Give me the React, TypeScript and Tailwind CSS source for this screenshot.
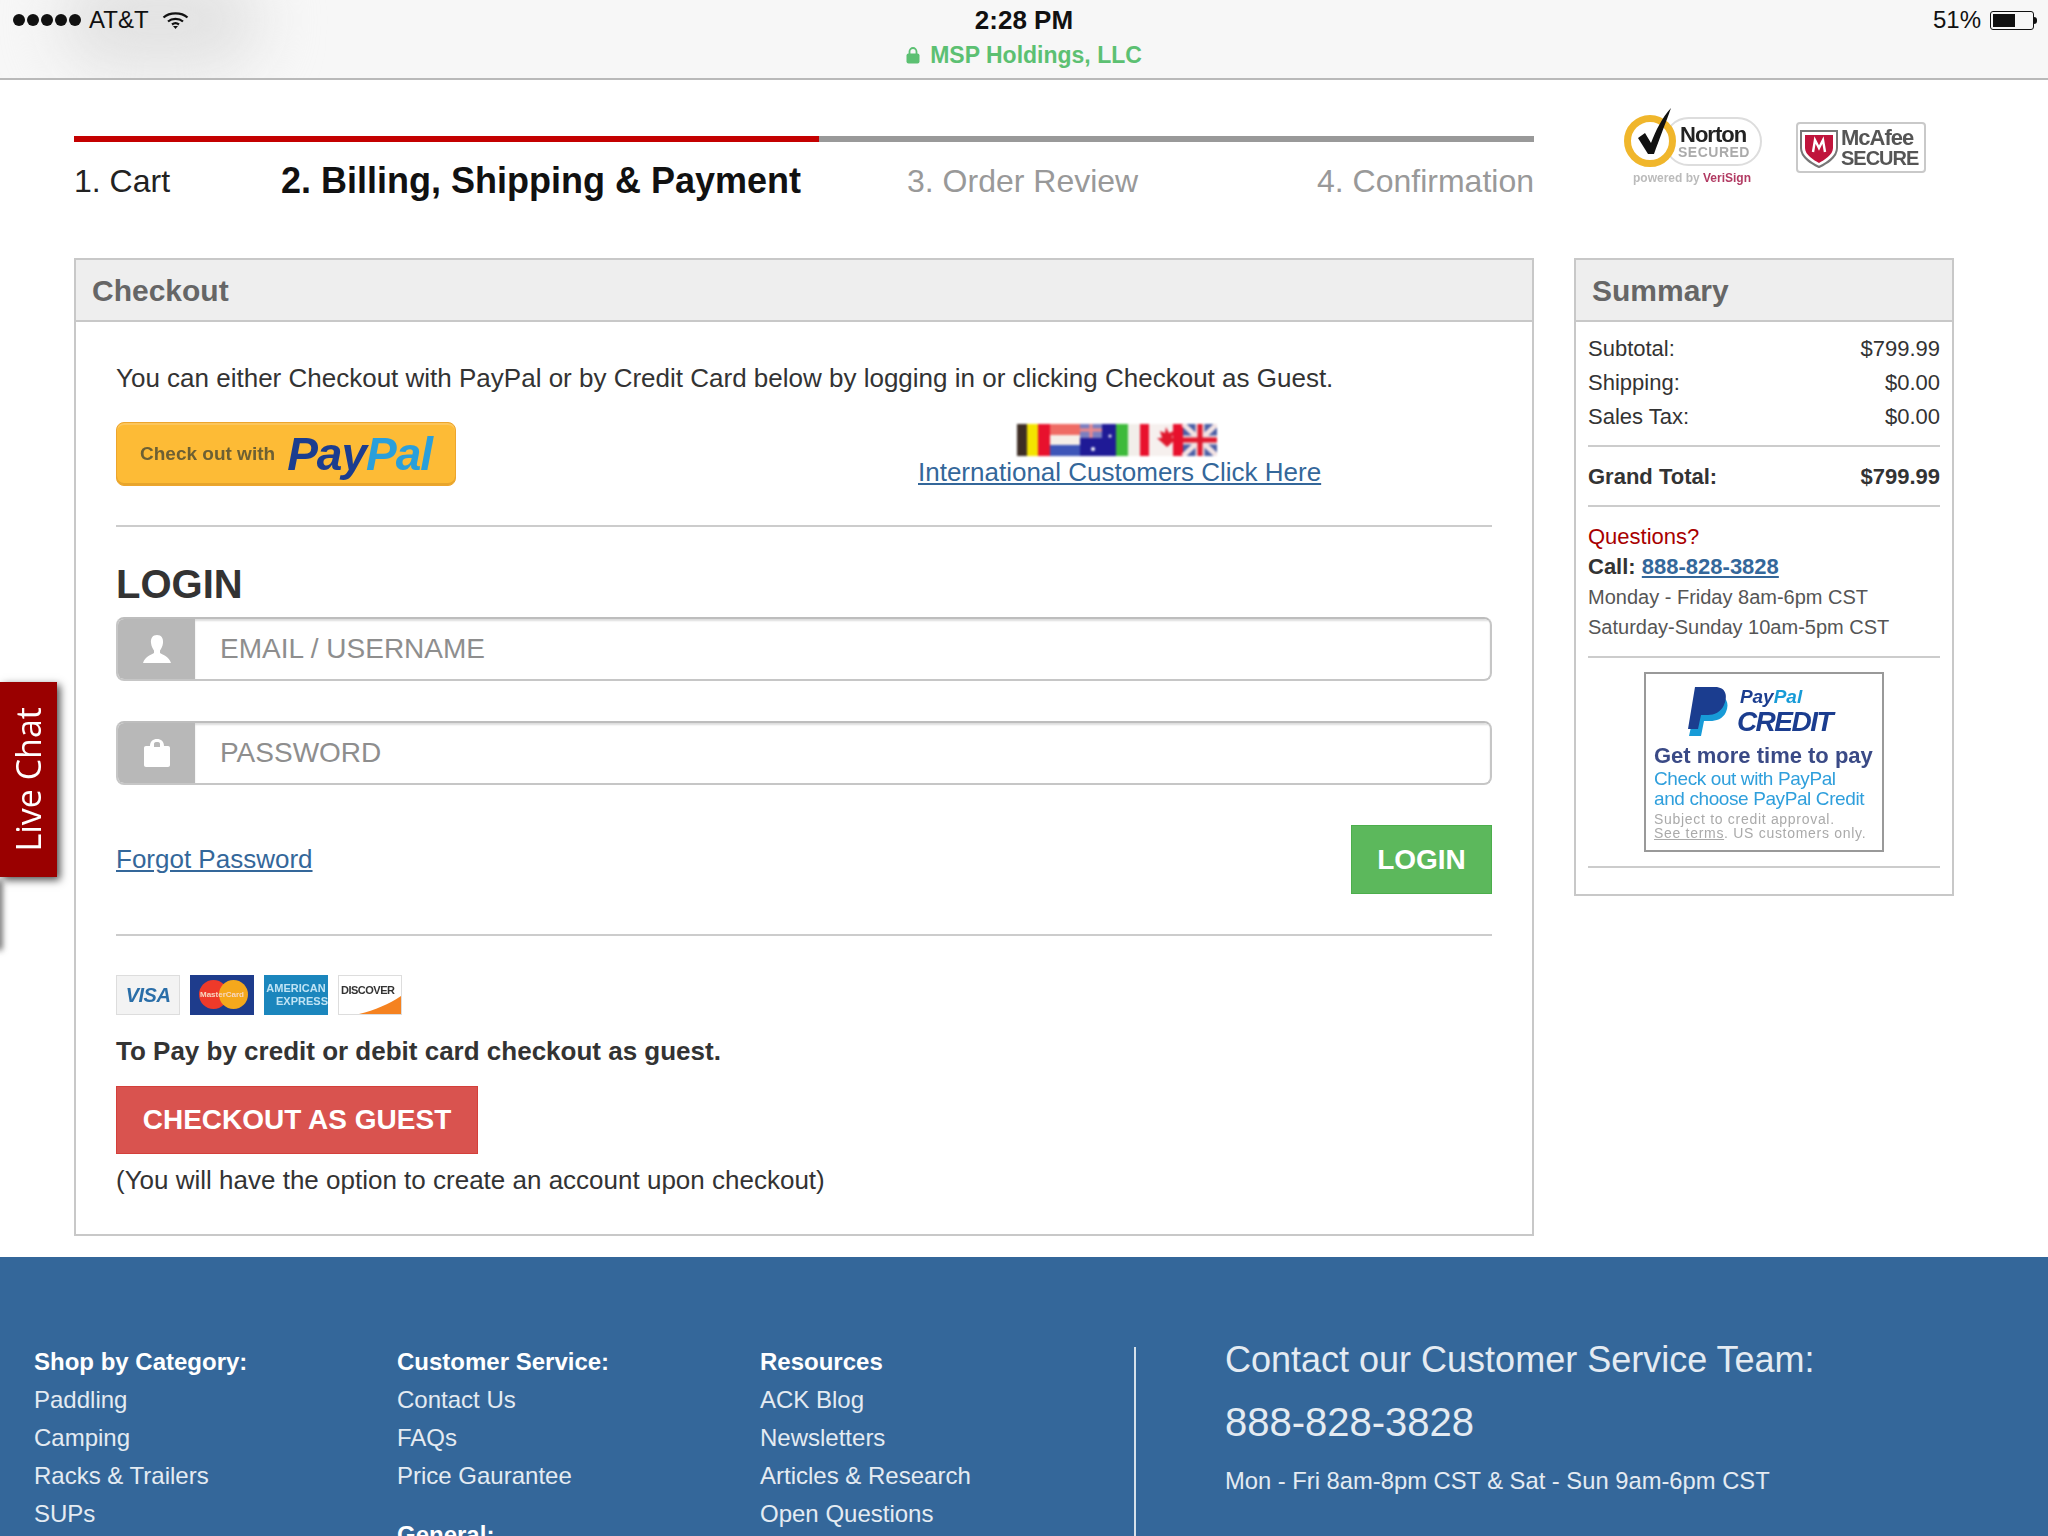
const font = 'font-["Liberation_Sans",Arial,sans-serif]'
const link = 'text-[#34679a] underline underline-offset-2'

function Wifi() {
  return (
    <svg width="27" height="18" viewBox="0 0 27 18" fill="none" stroke="#111" strokeWidth="2.2">
      <path d="M1.5 6.5 C7.5 1 19.5 1 25.5 6.5" />
      <path d="M6 10.5 C10 7 17 7 21 10.5" />
      <path d="M10 13.5 C12 12 15 12 17 13.5" />
      <path d="M11 15 L13.5 18 L16 15 Z" fill="#111" stroke="none" />
    </svg>
  )
}

function StatusBar() {
  return (
    <div className="relative h-[80px] overflow-hidden border-b-2 border-[#b9b9b9] bg-[#f7f7f7] text-[24px] text-[#111]">
      <div className="absolute -top-[30px] left-[60px] h-[100px] w-[200px] rounded-full bg-[#e2e2e2] blur-[30px]" />
      <div className="absolute left-[13px] top-[2px] flex items-center gap-[8px]">
        <div className="flex gap-[2px]">
          {[0, 1, 2, 3, 4].map((dot) => <span key={dot} className="size-[12px] rounded-full bg-[#111]" />)}
        </div>
        <span>AT&amp;T</span>
        <span className="ml-[5px]"><Wifi /></span>
      </div>
      <div className="absolute inset-x-0 top-[5px] flex flex-col items-center">
        <span className="text-[26px] font-bold leading-[30px]">2:28 PM</span>
        <span className="mt-[6px] flex items-center gap-[10px] text-[23px] font-bold leading-[28px] text-[#5cc072]">
          <svg width="14" height="17" viewBox="0 0 14 17" fill="#5cc072">
            <rect x="0.5" y="6.5" width="13" height="10" rx="2" />
            <path d="M3.5 7 V4.5 a3.5 3.5 0 0 1 7 0 V7" fill="none" stroke="#5cc072" strokeWidth="1.8" />
          </svg>
          MSP Holdings, LLC
        </span>
      </div>
      <div className="absolute right-[11px] top-[2px] flex items-center gap-[9px]">
        <span>51%</span>
        <div className="flex items-center">
          <div className="h-[19px] w-[44px] rounded-[3px] border border-[#111] p-[2px]">
            <div className="h-full w-[22px] bg-[#111]" />
          </div>
          <div className="h-[7px] w-[3px] rounded-r-full bg-[#111]" />
        </div>
      </div>
    </div>
  )
}

function Steps() {
  return (
    <div className="w-[1460px]">
      <div className="flex h-[6px] bg-[#999]">
        <div className="w-[745px] bg-[#c40000]" />
      </div>
      <div className="mt-[16px] flex h-[46px] items-center text-[32px] leading-[46px]">
        <span className="w-[207px] text-[#222]">1. Cart</span>
        <span className="w-[626px] text-[36px] font-bold text-[#111]">2. Billing, Shipping &amp; Payment</span>
        <span className="text-[#999]">3. Order Review</span>
        <span className="ml-auto text-[#999]">4. Confirmation</span>
      </div>
    </div>
  )
}

function TrustBadges() {
  return (
    <div className="ml-[90px] flex gap-[30px] blur-[0.5px]">
      <div className="relative -mt-[28px] h-[80px] w-[142px]">
        <div className="absolute left-[40px] top-[9px] h-[49px] w-[98px] rounded-[25px] border-2 border-[#ddd]" />
        <div className="absolute left-0 top-[7px] size-[52px] rounded-full border-[7px] border-[#f0b62b] bg-white" />
        <svg className="absolute left-[8px] top-0" width="42" height="54" viewBox="0 0 42 54" fill="#111">
          <path d="M6 30 L13 25 L19 35 C24 22 30 10 39 0 C34 14 27 32 22 46 L16 46 Z" />
        </svg>
        <span className="absolute left-[56px] top-[15px] text-[22px] font-bold leading-[24px] tracking-[-1px] text-[#222]">Norton</span>
        <span className="absolute left-[54px] top-[35px] text-[14px] font-bold leading-[18px] tracking-[0.5px] text-[#aaa]">SECURED</span>
        <span className="absolute left-[9px] top-[63px] whitespace-nowrap text-[12px] font-bold leading-[14px] text-[#bbb]">
          powered by <span className="text-[#b23b63]">VeriSign</span>
        </span>
      </div>
      <div className="-mt-[14px] flex h-[51px] w-[130px] items-center gap-[3px] rounded-[4px] border-2 border-[#c9c9c9] px-[2px]">
        <svg className="shrink-0" width="38" height="40" viewBox="0 0 38 40">
          <path d="M1 3 H37 V20 C37 30 25 36 19 39 C13 36 1 30 1 20 Z" fill="#fff" stroke="#777" strokeWidth="2" />
          <path d="M5 7 H33 V20 C33 27 24 32 19 35 C14 32 5 27 5 20 Z" fill="#c0143c" />
          <path d="M13 24 L15 12 L19 20 L23 12 L25 24" fill="none" stroke="#fff" strokeWidth="2.4" />
        </svg>
        <div className="flex flex-col font-bold tracking-[-1px] text-[#555]">
          <span className="text-[22px] leading-[21px]">McAfee</span>
          <span className="text-[20px] leading-[20px]">SECURE</span>
        </div>
      </div>
    </div>
  )
}

function PayPalButton() {
  return (
    <div className="flex h-[64px] w-[340px] shrink-0 items-center rounded-[8px] border border-[#eda52d] bg-[#fdbb36] pl-[23px] shadow-[inset_0_2px_0_#fcc65c,inset_0_-2px_0_#e7a52c]">
      <span className="text-[19px] font-bold text-[#6d6033] blur-[0.4px]">Check out with</span>
      <span className="ml-[12px] text-[46px] font-bold italic leading-[50px] tracking-[-1px] text-[#1b3d8f] blur-[0.3px]">
        Pay<span className="text-[#2a9fdb]">Pal</span>
      </span>
    </div>
  )
}

function Flags() {
  return (
    <svg className="ml-[99px] blur-[0.8px]" width="200" height="32" viewBox="0 0 200 32">
      <rect x="0" width="10" height="32" fill="#3d2d24" />
      <rect x="10" width="11" height="32" fill="#f4e400" />
      <rect x="21" width="12" height="32" fill="#e8112d" />
      <path d="M33 0 H64 V11 H33 Z" fill="#ef6b64" />
      <rect x="33" y="11" width="31" height="10" fill="#f6efe8" />
      <rect x="33" y="21" width="31" height="11" fill="#3d55b8" />
      <rect x="63" width="36" height="32" fill="#1f1a96" />
      <path d="M63 0 H85 V14 H63 Z" fill="#7b7fc0" />
      <path d="M63 6 H85 M74 0 V14" stroke="#f08a8a" strokeWidth="3" />
      <circle cx="76" cy="25" r="2" fill="#fff" />
      <circle cx="93" cy="12" r="1.5" fill="#fff" />
      <rect x="99" width="12" height="32" fill="#3dba3a" />
      <rect x="111" width="12" height="32" fill="#f2eeea" />
      <rect x="123" width="9" height="32" fill="#e8112d" />
      <rect x="132" width="34" height="32" fill="#f6f0ee" />
      <rect x="156" width="10" height="32" fill="#e8112d" />
      <path d="M149 3 L152 9 L157 7 L155 14 L160 14 L150 23 L140 14 L145 14 L143 7 L148 9 Z" fill="#e0182d" />
      <rect x="166" width="34" height="32" fill="#4a5ea5" />
      <path d="M166 0 L200 32 M200 0 L166 32" stroke="#f3e3e3" strokeWidth="5" />
      <path d="M166 16 H200 M183 0 V32" stroke="#f3e3e3" strokeWidth="9" />
      <path d="M166 16 H200 M183 0 V32" stroke="#e0182d" strokeWidth="5" />
    </svg>
  )
}

function UserIcon() {
  return (
    <svg width="28" height="28" viewBox="0 0 28 28" fill="white">
      <path d="M14 0 C18.5 0 20.5 3.5 20 8 C19.6 11.5 18 14 17 15.5 V18 C20 20 26 21.5 28 28 H0 C2 21.5 8 20 11 18 V15.5 C10 14 8.4 11.5 8 8 C7.5 3.5 9.5 0 14 0 Z" />
    </svg>
  )
}

function LockIcon() {
  return (
    <svg width="26" height="28" viewBox="0 0 26 28" fill="white">
      <path fillRule="evenodd" d="M6 7 C6 2.5 9 0 13 0 C17 0 20 2.5 20 7 H24 C25.2 7 26 7.8 26 9 V26 C26 27.2 25.2 28 24 28 H2 C0.8 28 0 27.2 0 26 V9 C0 7.8 0.8 7 2 7 Z M10 5 V8 H16 V5 C16 3.6 15 3 13 3 C11 3 10 3.6 10 5 Z" />
    </svg>
  )
}

function LoginField({ placeholder, icon }: { placeholder: string; icon: React.ReactNode }) {
  return (
    <div className="flex h-[64px] overflow-hidden rounded-[8px] border-2 border-[#c6c6c6] border-t-[#bdbdbd] bg-white">
      <div className="flex w-[77px] items-center justify-center bg-[#b8b8b8]">{icon}</div>
      <input
        placeholder={placeholder}
        readOnly
        className="min-w-0 flex-1 pl-[25px] text-[28px] shadow-[inset_0_2px_2px_#ddd] placeholder:text-[#8e8e8e] focus:outline-none"
      />
    </div>
  )
}

function CardLogos() {
  return (
    <div className="flex gap-[10px] blur-[0.5px]">
      <div className="flex h-[40px] w-[64px] items-center justify-center border border-[#ddd] bg-[#f3f3f3] text-[20px] font-bold italic tracking-[-0.5px] text-[#2a6ea8]">VISA</div>
      <div className="relative h-[40px] w-[64px] bg-[#1e3c8c]">
        <div className="absolute left-[9px] top-[5px] size-[29px] rounded-full bg-[#ee3a2a]" />
        <div className="absolute left-[29px] top-[5px] size-[29px] rounded-full bg-[#f5a81c]" />
        <span className="absolute inset-x-0 top-[14px] text-center text-[8px] font-bold leading-[12px] text-[#f8d8c0]">MasterCard</span>
      </div>
      <div className="flex h-[40px] w-[64px] flex-col items-center justify-center bg-[#1b86bd] text-[11px] font-bold leading-[13px] text-[#bfe3f4]">
        <span>AMERICAN</span>
        <span className="self-end">EXPRESS</span>
      </div>
      <div className="relative h-[40px] w-[64px] overflow-hidden border border-[#ddd] bg-white pl-[2px] pt-[7px] text-[11px] font-bold leading-[14px] tracking-[-0.5px] text-[#333]">
        DISCOVER
        <svg className="absolute bottom-0 right-0" width="42" height="18" viewBox="0 0 42 18">
          <path d="M0 18 C16 14 30 8 42 0 V18 Z" fill="#f58220" />
        </svg>
      </div>
    </div>
  )
}

function CheckoutPanel() {
  return (
    <section className="w-[1460px] shrink-0 border-2 border-[#c8c8c8]">
      <h2 className="flex h-[62px] items-center border-b-2 border-[#c8c8c8] bg-[#eee] pl-[16px] text-[30px] font-bold text-[#666]">Checkout</h2>
      <div className="px-[40px]">
        <p className="mt-[37px] text-[26px] leading-[38px] text-[#333]">
          You can either Checkout with PayPal or by Credit Card below by logging in or clicking Checkout as Guest.
        </p>
        <div className="mt-[25px] flex">
          <PayPalButton />
          <div className="ml-[462px] flex flex-col items-start pt-[2px]">
            <Flags />
            <a className={`whitespace-nowrap text-[26px] leading-[32px] ${link}`}>International Customers Click Here</a>
          </div>
        </div>
        <div className="mt-[37px] border-t-2 border-[#ccc]" />
        <h3 className="mt-[33px] text-[40px] font-bold leading-[48px] text-[#333]">LOGIN</h3>
        <div className="mt-[9px]"><LoginField placeholder="EMAIL / USERNAME" icon={<UserIcon />} /></div>
        <div className="mt-[40px]"><LoginField placeholder="PASSWORD" icon={<LockIcon />} /></div>
        <div className="mt-[40px] flex items-center justify-between">
          <a className={`text-[26px] ${link}`}>Forgot Password</a>
          <button className="flex h-[69px] w-[141px] items-center justify-center border border-[#4cae4c] bg-[#5cb85c] text-[28px] font-bold text-white">LOGIN</button>
        </div>
        <div className="mt-[40px] border-t-2 border-[#ccc]" />
        <div className="mt-[39px]"><CardLogos /></div>
        <p className="mt-[18px] text-[26px] font-bold leading-[36px] text-[#333]">To Pay by credit or debit card checkout as guest.</p>
        <button className="mt-[17px] flex h-[68px] w-[362px] items-center justify-center border border-[#d43f3a] bg-[#d9534f] text-[28px] font-bold text-white">CHECKOUT AS GUEST</button>
        <p className="mt-[7px] pb-[35px] text-[26px] leading-[38px] text-[#333]">(You will have the option to create an account upon checkout)</p>
      </div>
    </section>
  )
}

function SummaryRow({ label, value, bold }: { label: string; value: string; bold?: boolean }) {
  return (
    <div className={`flex h-[34px] items-center justify-between ${bold ? 'font-bold' : ''}`}>
      <span>{label}</span>
      <span>{value}</span>
    </div>
  )
}

function CreditAd() {
  return (
    <div className="mx-auto mt-[14px] h-[180px] w-[240px] border-2 border-[#999] bg-white px-[8px] pt-[13px] blur-[0.4px]">
      <div className="flex items-center justify-center gap-[5px] pr-[8px]">
        <svg width="44" height="50" viewBox="0 0 44 50">
          <path d="M10 8 H28 C38 8 42 16 38 25 C35 32 28 34 22 34 H16 L13 49 H1 Z" fill="#179bd7" />
          <path d="M7 0 H27 C38 0 40 9 36 18 C33 25 26 28 20 28 H13 L10 42 H0 Z" fill="#1b3d8f" />
        </svg>
        <div className="flex flex-col items-start">
          <span className="ml-[3px] text-[19px] font-bold italic leading-[20px] text-[#1b3d8f]">Pay<span className="text-[#179bd7]">Pal</span></span>
          <span className="text-[28px] font-bold italic leading-[30px] tracking-[-1.5px] text-[#1b3d8f]">CREDIT</span>
        </div>
      </div>
      <div className="mt-[6px] whitespace-nowrap text-[22px] font-bold leading-[26px] text-[#3a4a86]">Get more time to pay</div>
      <div className="whitespace-nowrap text-[19px] leading-[20px] tracking-[-0.4px] text-[#2f9fdc]">Check out with PayPal<br />and choose PayPal Credit</div>
      <div className="mt-[3px] whitespace-nowrap text-[14px] leading-[14px] tracking-[0.7px] text-[#aaa]">
        Subject to credit approval.<br /><span className="underline">See terms</span>. US customers only.
      </div>
    </div>
  )
}

function SummaryPanel() {
  return (
    <aside className="ml-[40px] h-[638px] w-[380px] shrink-0 border-2 border-[#c8c8c8]">
      <h2 className="flex h-[62px] items-center border-b-2 border-[#c8c8c8] bg-[#eee] pl-[16px] text-[30px] font-bold text-[#666]">Summary</h2>
      <div className="px-[12px] pt-[9px] text-[22px] text-[#333]">
        <SummaryRow label="Subtotal:" value="$799.99" />
        <SummaryRow label="Shipping:" value="$0.00" />
        <SummaryRow label="Sales Tax:" value="$0.00" />
        <div className="mt-[12px] border-t-2 border-[#ccc]" />
        <div className="mt-[12px]"><SummaryRow label="Grand Total:" value="$799.99" bold /></div>
        <div className="mt-[12px] border-t-2 border-[#ccc]" />
        <div className="mt-[15px] leading-[30px]">
          <div className="text-[#a80000]">Questions?</div>
          <div><b>Call:</b> <a className={`font-bold ${link}`}>888-828-3828</a></div>
          <div className="text-[20px] text-[#555]">Monday - Friday 8am-6pm CST</div>
          <div className="text-[20px] text-[#555]">Saturday-Sunday 10am-5pm CST</div>
        </div>
        <div className="mt-[14px] border-t-2 border-[#ccc]" />
        <CreditAd />
        <div className="mt-[14px] border-t-2 border-[#ccc]" />
      </div>
    </aside>
  )
}

function FooterColumn({ title, items, className }: { title: string; items: string[]; className?: string }) {
  return (
    <div className={className}>
      <div className="font-bold text-white">{title}</div>
      {items.map((item) => <div key={item}>{item}</div>)}
    </div>
  )
}

function Footer() {
  return (
    <footer className="mt-[21px] flex h-[280px] overflow-hidden bg-[#34679a] pl-[34px] pt-[86px] text-[24px] leading-[38px] text-[#e4ebf2]">
      <FooterColumn title="Shop by Category:" items={['Paddling', 'Camping', 'Racks & Trailers', 'SUPs']} className="w-[363px]" />
      <div className="w-[363px]">
        <FooterColumn title="Customer Service:" items={['Contact Us', 'FAQs', 'Price Gaurantee']} />
        <div className="mt-[21px] font-bold text-white">General:</div>
      </div>
      <FooterColumn title="Resources" items={['ACK Blog', 'Newsletters', 'Articles & Research', 'Open Questions']} className="w-[374px]" />
      <div className="mt-[4px] w-[2px] bg-[#d5e0ea]" />
      <div className="-mt-[8px] pl-[89px]">
        <div className="text-[36px] leading-[50px]">Contact our Customer Service Team:</div>
        <div className="mt-[12px] text-[40px] leading-[50px]">888-828-3828</div>
        <div className="mt-[15px] text-[23.75px] leading-[38px]">Mon - Fri 8am-8pm CST &amp; Sat - Sun 9am-6pm CST</div>
      </div>
    </footer>
  )
}

function LiveChat() {
  return (
    <>
      <div className="absolute left-0 top-[682px] flex h-[195px] w-[57px] items-center justify-center bg-[#9a0000] shadow-[3px_3px_8px_rgba(0,0,0,0.7)]">
        <span className="rotate-180 whitespace-nowrap font-['Open_Sans',sans-serif] text-[34px] font-medium text-white [writing-mode:vertical-rl]">Live Chat</span>
      </div>
      <div className="absolute -left-[4px] top-[880px] h-[70px] w-[6px] bg-[#555] blur-[3px]" />
    </>
  )
}

export default function App() {
  return (
    <div className={`relative h-[1536px] w-[2048px] overflow-hidden bg-white ${font}`}>
      <StatusBar />
      <div className="flex items-start pl-[74px] pt-[56px]">
        <Steps />
        <TrustBadges />
      </div>
      <div className="mt-[54px] flex items-start pl-[74px]">
        <CheckoutPanel />
        <SummaryPanel />
      </div>
      <Footer />
      <LiveChat />
    </div>
  )
}
